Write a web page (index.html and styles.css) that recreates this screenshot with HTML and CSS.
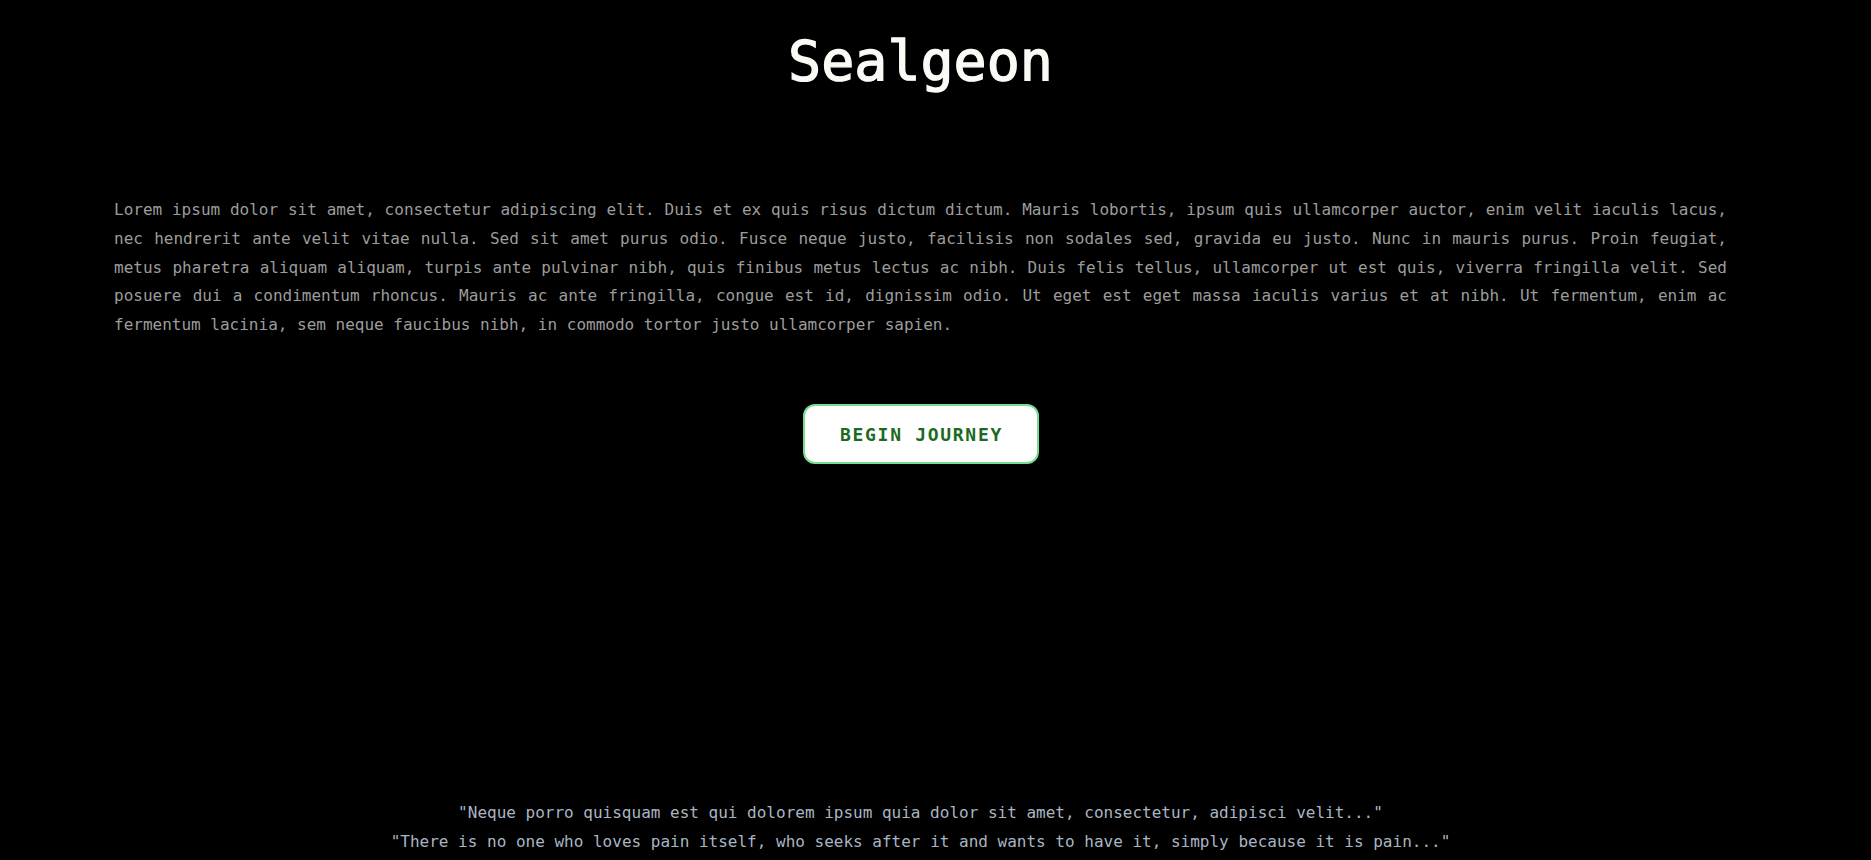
FILE: index.html
```html
<!DOCTYPE html>
<html lang="en">
<head>
<meta charset="utf-8">
<title>Sealgeon</title>
<link rel="stylesheet" href="styles.css">
</head>
<body>
<main class="page">
  <h1 class="title">Sealgeon</h1>
  <p class="intro">Lorem ipsum dolor sit amet, consectetur adipiscing elit. Duis et ex quis risus dictum dictum. Mauris lobortis, ipsum quis ullamcorper auctor, enim velit iaculis lacus, nec hendrerit ante velit vitae nulla. Sed sit amet purus odio. Fusce neque justo, facilisis non sodales sed, gravida eu justo. Nunc in mauris purus. Proin feugiat, metus pharetra aliquam aliquam, turpis ante pulvinar nibh, quis finibus metus lectus ac nibh. Duis felis tellus, ullamcorper ut est quis, viverra fringilla velit. Sed posuere dui a condimentum rhoncus. Mauris ac ante fringilla, congue est id, dignissim odio. Ut eget est eget massa iaculis varius et at nibh. Ut fermentum, enim ac fermentum lacinia, sem neque faucibus nibh, in commodo tortor justo ullamcorper sapien.</p>
  <div class="actions">
    <button class="begin" type="button">BEGIN JOURNEY</button>
  </div>
  <footer class="quotes">
    <p class="quote">"Neque porro quisquam est qui dolorem ipsum quia dolor sit amet, consectetur, adipisci velit..."</p>
    <p class="quote">"There is no one who loves pain itself, who seeks after it and wants to have it, simply because it is pain..."</p>
  </footer>
</main>
</body>
</html>
```

FILE: styles.css
```css
html, body {
  margin: 0;
  padding: 0;
  background: #000;
}

body {
  font-family: "DejaVu Sans Mono", "Liberation Mono", monospace;
  color: #9e9e9e;
  overflow: hidden;
}

.page {
  width: 1841px;
  display: flex;
  flex-direction: column;
  align-items: center;
}

.title {
  margin: 28px 0 0;
  font-family: "DejaVu Sans Mono", monospace;
  font-size: 55px;
  line-height: 66px;
  font-weight: normal;
  color: #fbfbf6;
  -webkit-text-stroke: 1.3px #fbfbf6;
  letter-spacing: 0;
}

.intro {
  align-self: stretch;
  margin: 102px 114px 0;
  font-size: 16px;
  line-height: 28.8px;
  text-align: justify;
  color: #9c9c9c;
}

.actions {
  margin-top: 64px;
  display: flex;
  justify-content: center;
}

.begin {
  width: 236px;
  height: 60px;
  border: 2px solid #74dd92;
  border-radius: 12px;
  background: #fff;
  color: #1b6a22;
  font-family: "DejaVu Sans Mono", monospace;
  font-weight: bold;
  font-size: 18px;
  letter-spacing: 1.7px;
  padding: 2px 0 0 2px;
  cursor: pointer;
}

.quotes {
  margin-top: 335px;
  text-align: center;
}

.quote {
  margin: 0;
  font-size: 16px;
  line-height: 28.8px;
  color: #a9b5c3;
}
```
